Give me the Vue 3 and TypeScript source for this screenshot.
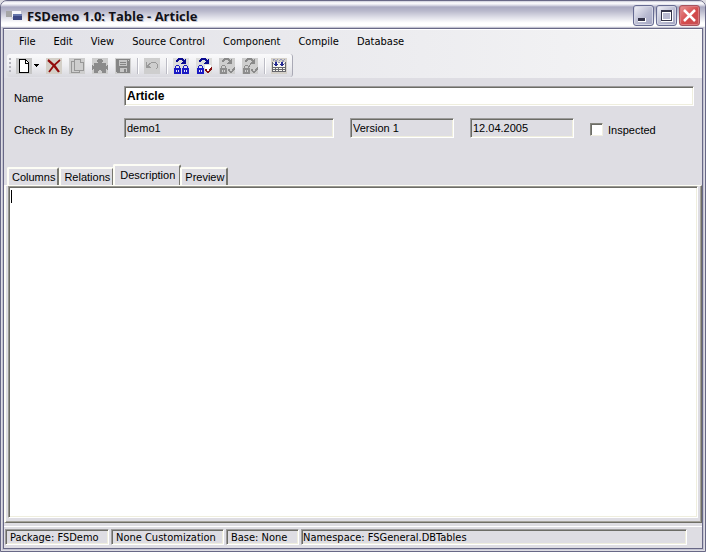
<script setup lang="ts">
import { ref } from 'vue'

interface Tool {
  id: string
  label: string
  disabled?: boolean
  separated?: boolean
}

const menus = ['File', 'Edit', 'View', 'Source Control', 'Component', 'Compile', 'Database']
const tools: Tool[] = [
  { id: 'new', label: 'New' },
  { id: 'delete', label: 'Delete' },
  { id: 'copy', label: 'Copy', disabled: true },
  { id: 'component', label: 'Component', disabled: true },
  { id: 'save', label: 'Save', disabled: true },
  { id: 'undo', label: 'Undo', disabled: true, separated: true },
  { id: 'checkout', label: 'Check out', separated: true },
  { id: 'checkin', label: 'Check in' },
  { id: 'revert', label: 'Undo check out', disabled: true },
  { id: 'inspect', label: 'Inspect', disabled: true },
  { id: 'grid', label: 'Database', separated: true },
]
const tabs = ['Columns', 'Relations', 'Description', 'Preview']
const activeTab = ref('Description')
const name = ref('Article')
const inspected = ref(false)
const description = ref('')
</script>

<template>
  <div class="window">
    <header class="title-bar">
      <svg class="app-icon" width="16" height="12" viewBox="0 0 16 12" shape-rendering="crispEdges">
        <path fill="#a6a6a6" d="M0 1h7v6H0z" />
        <path fill="#f7f7fb" d="M6 1h9v3H8v3H6z" />
        <path fill="#3d4984" d="M7 4h9v6H7z" />
        <path fill="#6575ab" d="M7 4h9v2H7z" />
        <path fill="#d5d6df" d="M5 7h2v2H5z" />
      </svg>
      <h1>FSDemo 1.0: Table - Article</h1>
      <div class="captions">
        <button class="caption" aria-label="Minimize">
          <svg width="19" height="19" shape-rendering="crispEdges"><path fill="#fff" d="M4 12h8v4H4z" /><path fill="#343449" d="M4 12h7v3H4z" /></svg>
        </button>
        <button class="caption" aria-label="Maximize">
          <svg width="19" height="19" shape-rendering="crispEdges"><path fill="#fff" d="M4 4h12v12H4z" /><path fill="#343449" d="M4 4h11v11H4zM5 6v8h9V6z" fill-rule="evenodd" /><path fill="#b9bad0" d="M6 7h7v6H6z" /></svg>
        </button>
        <button class="caption close" aria-label="Close">
          <svg width="19" height="19"><path stroke="#fff" stroke-width="2.500" d="m4 4 11 11M15 4 4 15" /></svg>
        </button>
      </div>
    </header>

    <div class="client">
      <div class="bars">
        <nav class="menu-bar">
          <button v-for="menu in menus" :key="menu">{{ menu }}</button>
        </nav>
        <div class="tool-bar">
          <i class="grip"></i>
          <button
            v-for="tool in tools"
            :key="tool.id"
            class="tool"
            :class="{ separated: tool.separated, plain: tool.id.startsWith('check'), drop: tool.id === 'new', soft: tool.disabled }"
            :aria-label="tool.label"
            :disabled="tool.disabled"
          >
            <svg width="16" height="16" viewBox="0 0 16 16" shape-rendering="crispEdges">
              <g v-if="tool.id === 'new'">
                <path d="M3 1h7v1h1v1h1v1h1v11H3z" fill="#000" />
                <path d="M4 2h5v4h3v8H4zM10 3h1v1h1v1h-2z" fill="#fff" />
              </g>
              <g v-else-if="tool.id === 'delete'" fill="none" stroke="#920c0c" shape-rendering="auto">
                <path d="M2 2c4 3 8 7 11 12" stroke-width="2.200" />
                <path d="M14 2C10 5 6 9 3 14" stroke-width="1.700" />
              </g>
              <g v-else-if="tool.id === 'copy'" fill="#cecece" stroke="#979797">
                <path d="M5.500 3.500h-3v11h8v-2" />
                <path d="M5.500 1.500h6l3 3v8h-9z" />
                <path d="M11.500 1.500v3h3" />
              </g>
              <path v-else-if="tool.id === 'component'" fill="#8b8b8b" d="M6 1h4v1h1v2h-1v1h4v3h1V7h1v5h-1v-1h-1v4h-4v-2H9v-1H7v1H6v2H2v-4H1v1H0V7h1v1h1V5h4V4H5V2h1z" />
              <g v-else-if="tool.id === 'save'">
                <path fill="#858585" d="M1 1h14v14H2v-1H1z" />
                <path fill="#c6c6c6" d="M4 2h8v6H4zM5 10h7v4H5zM13 2h1v1h-1z" />
                <path fill="#858585" d="M5 4h6v1H5zM5 6h6v1H5zM9 11h2v3H9z" />
              </g>
              <path v-else-if="tool.id === 'undo'" fill="#999" d="M2 4h1v3h1V6h1V5h2V4h5v1h1v1h1v4h-1v1h-1v-1h1V6h-1V5H7v1H6v1H5v1h1v1h1v1H2z" />
              <g v-else-if="tool.id === 'grid'">
                <path fill="#68686e" d="M1 4h14v10H1z" />
                <path fill="#f5f5ef" d="M2 4h12v5H2zM2 10h2v1H2zM5 10h2v1H5zM8 10h3v1H8zM12 10h2v1h-2zM2 12h2v1H2zM5 12h2v1H5zM8 12h3v1H8zM12 12h2v1h-2z" />
                <path fill="#9698b4" d="M2 1h2v1H2zM6 1h1v1H6zM9 1h2v1H9zM13 1h1v1h-1zM1 3h1V2h1v1zM4 2h2v2H4zM8 2h1v1H8zM11 2h2v2h-2zM7 4h2v1H7zM2 5h1v1H2zM13 5h1v1h-1z" />
                <path fill="#242991" d="M4 4h2v2h1v1H6v1H4V7H3V6h1zM10 4h2v2h1v1h-1v1h-2V7H9V6h1z" />
              </g>
              <g v-else>
                <path :fill="tool.disabled ? '#898989' : '#0b0b91'" d="M5 0h5v1h1v1h1V1h1v5H8V5h1V4h1V3H9V2H6v1H5v1H3V2h1V1h1z" />
                <path :fill="tool.disabled ? '#8d8d8d' : '#1a1ac4'" d="M1 10h1V8h1V7h3v1h1v2h1v6H1zM3 8v2h3V8z" fill-rule="evenodd" />
                <path :fill="tool.disabled ? '#d0d0d0' : '#e5e5f5'" d="M3 12h1v2H3zM5 12h1v2H5zM3 9h3v1H3z" />
                <g v-if="tool.id === 'checkout'">
                  <path fill="#1a1ac4" d="M9 10h1V8h1V7h3v1h1v2h1v6H9zM11 8v2h3V8z" fill-rule="evenodd" />
                  <path fill="#e5e5f5" d="M11 12h1v2h-1zM13 12h1v2h-1zM11 9h3v1h-3z" />
                </g>
                <g v-else>
                  <path :fill="tool.disabled ? '#cfcfcf' : '#fff'" d="M9 7h6v4l-3 3-3-2z" />
                  <path :fill="tool.disabled ? '#8b8b8b' : '#851010'" d="M9 11h2v2h2v-2h1v-1h1V9h1v3h-1v1h-1v1h-1v1h-2v-1h-1v-1H9z" />
                  <path v-if="tool.id === 'inspect'" fill="#898989" d="M8 5h2v1H9v1H8v2H7V7h1z" />
                </g>
              </g>
            </svg>
            <svg v-if="tool.id === 'new'" class="arrow" width="5" height="3" shape-rendering="crispEdges"><path d="M0 0h5v1H4v1H3v1H2V2H1V1H0z" /></svg>
          </button>
        </div>
      </div>

      <form class="details" @submit.prevent>
        <div class="row">
          <label for="name">Name</label>
          <input id="name" v-model="name" class="field name" type="text" />
        </div>
        <div class="row">
          <label for="checkin">Check In By</label>
          <input id="checkin" class="field user" type="text" value="demo1" readonly />
          <input class="field" type="text" value="Version 1" aria-label="Version" readonly />
          <input class="field" type="text" value="12.04.2005" aria-label="Date" readonly />
          <label class="check"><input v-model="inspected" type="checkbox" />Inspected</label>
        </div>
      </form>

      <div class="tabs" role="tablist">
        <button
          v-for="tab in tabs"
          :key="tab"
          role="tab"
          :aria-selected="activeTab === tab"
          :class="{ active: activeTab === tab }"
          @click="activeTab = tab"
        >{{ tab }}</button>
      </div>
      <main class="page">
        <textarea v-model="description" aria-label="Description" :class="{ empty: !description }"></textarea>
      </main>

      <footer class="status">
        <span class="package">Package: FSDemo</span>
        <span class="custom">None Customization</span>
        <span class="base">Base: None</span>
        <span class="namespace">Namespace: FSGeneral.DBTables</span>
      </footer>
    </div>
  </div>
</template>

<style>
body {
  margin: 0;
  background: #dedde3;
}
</style>

<style scoped>
* {
  box-sizing: border-box;
}
.window {
  display: flex;
  flex-direction: column;
  height: 100vh;
  border: 1px solid #686886;
  border-radius: 7px 7px 0 0;
  background: #dedde3;
  color: #000;
  font: 11px/14px "DejaVu Sans Condensed", sans-serif;
  overflow: hidden;
}
button, input, textarea {
  margin: 0;
  padding: 0;
  border: 0;
  border-radius: 0;
  color: inherit;
  font: inherit;
}
.title-bar {
  display: flex;
  align-items: center;
  flex: none;
  height: 27px;
  padding: 2px 5px 0 5px;
  background: linear-gradient(#c9c9d8 0, #fff 2px, #e0e0ea 4px, #a9a9c1 6px, #b9b9cc 10px, #dddde7 16px, #fff 22px, #fff 25px, #c8c8d5 27px);
}
.app-icon {
  flex: none;
  margin-right: 5px;
}
h1 {
  flex: 1;
  margin: 0;
  font: bold 13px/18px "Open Sans", sans-serif;
  color: #111118;
  text-shadow: 1px 1px #c5c5d2;
  white-space: nowrap;
}
.captions {
  display: flex;
  gap: 2px;
}
.caption {
  width: 21px;
  height: 21px;
  border: 1px solid #666b92;
  border-radius: 3px;
  background: linear-gradient(135deg, #f2f2f8, #b9bbd1 55%, #a2a4c2);
  box-shadow: inset 0 0 0 1px #d6d7e5;
}
.caption svg {
  display: block;
}
.close {
  border-color: #a6535d;
  background: linear-gradient(135deg, #e99595, #d4494a 55%, #c44e53);
  box-shadow: inset 0 0 0 1px #dc7b7f;
}
.client {
  display: flex;
  flex-direction: column;
  flex: 1;
  min-height: 0;
  margin: 0 2px 2px;
  border: 1px solid #686886;
  outline: 1px solid #c3c3d2;
}
.bars {
  flex: none;
  height: 49px;
  border-top: 1px solid #fff;
  background: linear-gradient(90deg, #e1e1e7, #f5f5f6);
}
.menu-bar {
  display: flex;
  height: 24px;
  padding-left: 9px;
}
.menu-bar button {
  padding: 0 6px;
  margin-right: 6px;
  background: none;
  white-space: nowrap;
}
.tool-bar {
  display: flex;
  align-items: center;
  width: 286px;
  height: 23px;
  margin-left: 3px;
  padding-left: 2px;
  border-right: 1px solid #a9a9b5;
  border-radius: 3px;
  background: linear-gradient(#fafafb, #eeeef1 50%, #d9d9df);
}
.grip {
  flex: none;
  width: 2px;
  height: 15px;
  margin-right: 5px;
  background: repeating-linear-gradient(#b2b2ba 0 2px, transparent 2px 4px);
}
.tool {
  display: flex;
  align-items: center;
  flex: none;
  height: 16px;
  margin-right: 7px;
  background: #d4d0c8;
}
.tool.drop {
  background: linear-gradient(90deg, #c5c5c5 16px, transparent 16px);
}
.tool.soft {
  background: #cecece;
}
.tool.plain {
  background: #dddddc;
}
.arrow {
  margin-left: 2px;
}
.separated {
  position: relative;
  margin-left: 6px;
}
.separated::before {
  content: "";
  position: absolute;
  left: -7px;
  width: 2px;
  height: 16px;
  background: linear-gradient(90deg, #bcbcc5 50%, #fff 50%);
}
.details {
  display: flex;
  flex-direction: column;
  flex: none;
  gap: 12px;
  height: 86px;
  padding: 8px 8px 0 10px;
  font: 11px/14px "Liberation Sans", Arial, sans-serif;
}
.row {
  display: flex;
  gap: 16px;
}
.row > label:first-child {
  width: 94px;
  padding-top: 5px;
}
.field {
  width: 104px;
  height: 20px;
  padding: 0 2px 1px;
  border: 1px solid #fff;
  border-top-color: #9c9b9b;
  border-left-color: #9c9b9b;
  background: #dedde3;
  box-shadow: inset 1px 1px #6c6c66, inset -1px -1px #efeede;
}
.user {
  width: 210px;
}
.name {
  flex: 1;
  background: #fff;
  font-size: 12px;
  font-weight: bold;
}
.check {
  display: flex;
  align-items: center;
  gap: 5px;
  padding-top: 3px;
}
.check input {
  appearance: none;
  width: 13px;
  height: 13px;
  border: 1px solid #f1efe2;
  border-top-color: #85857e;
  border-left-color: #85857e;
  background: #fff;
  box-shadow: inset 1px 1px #6c6c66;
}
.check input:checked {
  background: #333;
}
.tabs {
  display: flex;
  align-items: flex-end;
  flex: none;
  height: 21px;
  padding-left: 3px;
  font: 11px/14px "Liberation Sans", Arial, sans-serif;
}
.tabs button {
  height: 18px;
  padding: 0 2px 0 3px;
  border: 2px solid #fdfdf5;
  border-right-color: #77776f;
  border-bottom: 0;
  border-radius: 2px 2px 0 0;
  background: #dedde3;
}
.tabs .active {
  height: 21px;
  margin: 0 -1px;
  padding: 0 4px 2px 5px;
}
.page {
  display: flex;
  flex: 1;
  min-height: 0;
  padding: 0 1px 1px 2px;
  border: 1px solid #6f6e66;
  border-top: 1px solid #fdfdf5;
  border-left: 2px solid #fdfdf5;
  box-shadow: inset -1px -1px #a5a39b;
}
textarea {
  flex: 1;
  margin: 0 2px 3px 0;
  padding: 2px 3px;
  border: 1px solid #fff;
  border-top-color: #999891;
  border-left-color: #999891;
  outline: 0;
  background: #fff;
  box-shadow: inset 1px 1px #6c6c66, inset -1px -1px #efeede;
  resize: none;
}
.empty:not(:focus) {
  background: linear-gradient(#000, #000) 2px 3px / 1px 13px no-repeat #fff;
}
.status {
  display: flex;
  flex: none;
  gap: 2px;
  height: 22px;
  margin-top: 3px;
  padding: 2px 15px 3px 1px;
  border-top: 1px solid #fff;
}
.status span {
  height: 16px;
  padding: 1px 4px 0;
  border: 1px solid #fff;
  border-top-color: #9c9b9b;
  border-left-color: #9c9b9b;
  box-shadow: inset 1px 1px #6c6c66, inset -1px -1px #efeede;
  white-space: nowrap;
}
.package {
  width: 104px;
}
.custom {
  width: 113px;
}
.base {
  width: 73px;
}
.status .namespace {
  flex: 1;
  padding-left: 1px;
}
</style>
